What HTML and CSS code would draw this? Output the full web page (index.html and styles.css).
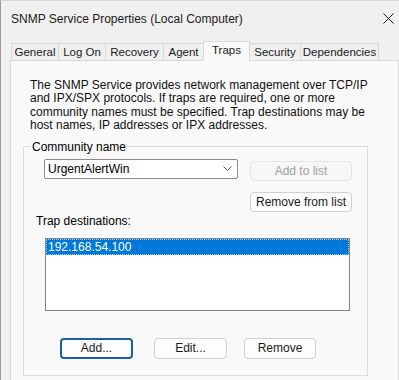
FILE: index.html
```html
<!DOCTYPE html>
<html>
<head>
<meta charset="utf-8">
<link rel="stylesheet" href="styles.css">
</head>
<body>
<div class="window">
  <div class="titlebar">
    <span class="title">SNMP Service Properties (Local Computer)</span>
    <svg class="close" width="11" height="11" viewBox="0 0 11 11"><path d="M0.5 0.5 L10.5 10.5 M10.5 0.5 L0.5 10.5" stroke="#1a1a1a" stroke-width="1" fill="none"/></svg>
  </div>
  <div class="tabs">
    <div class="tab t-general">General</div>
    <div class="tab t-logon">Log On</div>
    <div class="tab t-recovery">Recovery</div>
    <div class="tab t-agent">Agent</div>
    <div class="tab active t-traps">Traps</div>
    <div class="tab t-security">Security</div>
    <div class="tab t-deps">Dependencies</div>
  </div>
  <div class="page">
    <p class="desc">The SNMP Service provides network management over TCP/IP<br>and IPX/SPX protocols. If traps are required, one or more<br>community names must be specified. Trap destinations may be<br>host names, IP addresses or IPX addresses.</p>
    <fieldset class="group">
      <legend>Community name</legend>
      <div class="row">
        <div class="combo">
          <span>UrgentAlertWin</span>
          <svg width="9" height="5" viewBox="0 0 9 5"><path d="M0.5 0.5 L4.5 4.5 L8.5 0.5" stroke="#555" stroke-width="1" fill="none"/></svg>
        </div>
        <div class="btncol">
          <div class="btn wide disabled">Add to list</div>
          <div class="btn wide">Remove from list</div>
        </div>
      </div>
      <div class="label">Trap destinations:</div>
      <div class="listbox">
        <div class="item sel">192.168.54.100</div>
      </div>
      <div class="buttons">
        <div class="btn focus">Add...</div>
        <div class="btn edit">Edit...</div>
        <div class="btn remove">Remove</div>
      </div>
    </fieldset>
  </div>
</div>
</body>
</html>
```

FILE: styles.css
```css
* { box-sizing: border-box; }
html, body {
  margin: 0;
  padding: 0;
  width: 399px;
  height: 380px;
  overflow: hidden;
  background: #f0f0f0;
}
body {
  font-family: "Liberation Sans", Arial, sans-serif;
  font-size: 12px;
  color: #000;
}
.window {
  width: 399px;
  height: 380px;
  overflow: hidden;
  background: #f0f0f0;
  border-left: 1px solid #9a9a9a;
  border-top: 1px solid #d6d6d6;
}
.titlebar {
  height: 35px;
  display: flex;
  align-items: center;
  padding-left: 10px;
  position: relative;
}
.title {
  font-size: 12px;
  color: #1a1a1a;
}
.close {
  position: absolute;
  left: 382px;
  top: 12px;
}
.tabs {
  display: flex;
  align-items: flex-end;
  margin-left: 10px;
  margin-top: 5px;
  height: 19px;
  position: relative;
  z-index: 1;
}
.tab {
  height: 17px;
  line-height: 16px;
  text-align: center;
  font-size: 11.5px;
  white-space: nowrap;
  border: 1px solid #d9d9d9;
  border-bottom: none;
  border-left: none;
  background: #f0f0f0;
  color: #1a1a1a;
}
.tab:first-child { border-left: 1px solid #d9d9d9; }
.t-general { width: 48px; }
.t-logon { width: 47px; }
.t-recovery { width: 58px; }
.t-agent { width: 40px; }
.t-traps { width: 47px; }
.t-security { width: 51px; }
.t-deps { width: 78px; }
.tab.active {
  height: 20px;
  margin-bottom: -1px;
  background: #f9f9f9;
  border-left: 1px solid #d9d9d9;
  margin-left: -1px;
  line-height: 17px;
}
.page {
  margin-left: 9px;
  width: 389px;
  height: 330px;
  background: #f9f9f9;
  border: 1px solid #d9d9d9;
  padding-top: 18px;
}
.desc {
  margin: 0 0 0 19px;
  line-height: 13.4px;
  color: #111;
}
.group {
  margin: 7px 0 0 12px;
  width: 345px;
  height: 236px;
  border: 1px solid #dcdcdc;
  padding: 0;
}
.group legend {
  margin-left: 6px;
  padding: 0 2px;
  line-height: 14px;
  font-size: 12px;
}
.row {
  display: flex;
  align-items: flex-start;
  margin-top: 5px;
  margin-left: 20px;
}
.combo {
  width: 194px;
  height: 20px;
  background: #fff;
  border: 1px solid #8a8a8a;
  border-radius: 2px;
  display: flex;
  align-items: center;
  justify-content: space-between;
  padding: 0 5px 0 3px;
}
.btncol {
  margin-left: 12px;
  margin-top: 2px;
  display: flex;
  flex-direction: column;
  gap: 11px;
}
.btn {
  height: 21px;
  width: 73px;
  border: 1px solid #d0d0d0;
  border-radius: 4px;
  background: #fdfdfd;
  display: flex;
  align-items: center;
  justify-content: center;
  color: #1a1a1a;
}
.btn.wide {
  width: 102px;
  height: 20px;
}
.btn.disabled {
  color: #a0a0a0;
  border-color: #e5e5e5;
  background: #f7f7f7;
}
.btn.focus {
  border: 2px solid #1b5fa6;
}
.label {
  margin: 2px 0 0 12px;
  line-height: 14px;
}
.listbox {
  margin: 10px 0 0 21px;
  width: 305px;
  height: 73px;
  background: #fff;
  border: 1px solid #828282;
}
.item {
  height: 16px;
  line-height: 16px;
  padding-left: 2px;
}
.item.sel {
  background: #0078d7;
  color: #fff;
  outline: 1px dotted #9ec8ec;
  outline-offset: -1px;
}
.buttons {
  display: flex;
  margin: 27px 0 0 36px;
}
.btn.edit { margin-left: 21px; }
.btn.remove { margin-left: 17px; width: 72px; }
```
